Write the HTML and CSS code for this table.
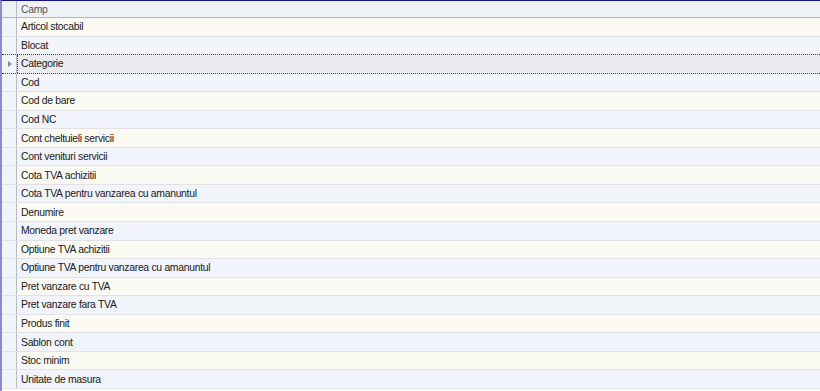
FILE: index.html
```html
<!DOCTYPE html>
<html>
<head>
<meta charset="utf-8">
<link rel="stylesheet" href="styles.css">
</head>
<body>
<div class="grid">
  <div class="row head"><div class="ind"></div><div class="cell">Camp</div></div>
  <div class="row odd"><div class="ind"></div><div class="cell">Articol stocabil</div></div>
  <div class="row even pre"><div class="ind"></div><div class="cell">Blocat</div></div>
  <div class="row focus"><div class="ind"><span class="arrow"></span></div><div class="cell">Categorie</div></div>
  <div class="row even"><div class="ind"></div><div class="cell">Cod</div></div>
  <div class="row odd"><div class="ind"></div><div class="cell">Cod de bare</div></div>
  <div class="row even"><div class="ind"></div><div class="cell">Cod NC</div></div>
  <div class="row odd"><div class="ind"></div><div class="cell">Cont cheltuieli servicii</div></div>
  <div class="row even"><div class="ind"></div><div class="cell">Cont venituri servicii</div></div>
  <div class="row odd"><div class="ind"></div><div class="cell">Cota TVA achizitii</div></div>
  <div class="row even"><div class="ind"></div><div class="cell">Cota TVA pentru vanzarea cu amanuntul</div></div>
  <div class="row odd"><div class="ind"></div><div class="cell">Denumire</div></div>
  <div class="row even"><div class="ind"></div><div class="cell">Moneda pret vanzare</div></div>
  <div class="row odd"><div class="ind"></div><div class="cell">Optiune TVA achizitii</div></div>
  <div class="row even"><div class="ind"></div><div class="cell">Optiune TVA pentru vanzarea cu amanuntul</div></div>
  <div class="row odd"><div class="ind"></div><div class="cell">Pret vanzare cu TVA</div></div>
  <div class="row even"><div class="ind"></div><div class="cell">Pret vanzare fara TVA</div></div>
  <div class="row odd"><div class="ind"></div><div class="cell">Produs finit</div></div>
  <div class="row even"><div class="ind"></div><div class="cell">Sablon cont</div></div>
  <div class="row odd"><div class="ind"></div><div class="cell">Stoc minim</div></div>
  <div class="row even"><div class="ind"></div><div class="cell">Unitate de masura</div></div>
</div>
</body>
</html>
```
FILE: styles.css
```css
html, body {
  margin: 0;
  padding: 0;
  background: #ffffff;
  overflow: hidden;
}
.grid {
  width: 820px;
  height: 391px;
  box-sizing: border-box;
  border-top: 1px solid #14148c;
  border-left: 2px solid #8c8cc8;
  font-family: "Liberation Sans", Arial, sans-serif;
  font-size: 10.4px;
  letter-spacing: -0.3px;
  color: #202020;
  display: flex;
  flex-direction: column;
}
.row {
  display: flex;
  height: 18.55px;
  flex: none;
  box-sizing: border-box;
  border-bottom: 1px solid #e2e2e6;
}
.row.head {
  height: 17px;
  background: #eef1f6;
  border-bottom: 1px solid #b4b7c2;
  color: #505464;
}
.row.odd { background: #fbfbf3; }
.row.even { background: #f1f4fa; }
.row.pre { border-bottom: 1px dotted #444; }
.row.focus {
  background: #ebebef;
  border-bottom: 1px dotted #444;
}
.ind {
  width: 15px;
  flex: none;
  box-sizing: border-box;
  border-right: 1px solid #b8bbc6;
  background: #f2f4f9;
  display: flex;
  align-items: center;
  justify-content: center;
}
.head .ind { background: #eef1f6; }
.cell {
  flex: 1;
  padding-left: 4px;
  display: flex;
  align-items: center;
  white-space: nowrap;
}
.focus .cell {
  border-left: 1px dotted #444;
  padding-left: 3px;
}
.arrow {
  width: 0;
  height: 0;
  border-top: 3.5px solid transparent;
  border-bottom: 3.5px solid transparent;
  border-left: 4px solid #8a8a8a;
  margin-left: 1px;
}
```
